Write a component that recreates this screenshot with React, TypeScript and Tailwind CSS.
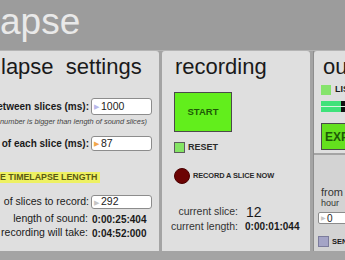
import React from 'react';

const Field = ({ value, tip }: { value: string; tip: string }) => (
  <div className="flex items-center h-full w-[61px] bg-white border border-[#8c8c8c] rounded-[3px] pl-[2px]">
    <span className={`text-[7px] leading-none ${tip}`}>▶</span>
    <span className="ml-[2px] text-[10.5px] text-[#222]">{value}</span>
  </div>
);

export default function App() {
  return (
    <div className="w-[345px] h-[260px] overflow-hidden bg-[#a4a4a4] font-['Liberation_Sans',Arial,sans-serif] text-[#1a1a1a]">
      <header className="h-[51px] bg-[#9c9c9c] border-b border-[#b4b4b4] overflow-hidden">
        <div className="pt-[2px] text-[37px] leading-[40px] text-[#e9e9e9] whitespace-nowrap">apse</div>
      </header>

      <div className="flex h-[200px] gap-[3px]">
        {/* settings */}
        <section className="w-[159px] shrink-0 bg-[#dfdfdf] rounded-tr-[3px] flex flex-col">
          <div className="h-[47px] pt-[5px] pl-[1px] text-[22px] leading-[22px] whitespace-nowrap">lapse&nbsp; settings</div>

          <div className="flex h-[17px] gap-[2px]">
            <div className="w-[89px] flex justify-end items-center text-[10px] font-bold whitespace-nowrap">etween slices (ms):</div>
            <Field value="1000" tip="text-[#b8b8ea]" />
          </div>
          <div className="h-[13px] flex items-center text-[7.4px] italic text-[#444] whitespace-nowrap">number is bigger than length of sound slices)</div>

          <div className="flex h-[15px] gap-[2px] mt-[8px]">
            <div className="w-[89px] flex justify-end items-center text-[10px] font-bold whitespace-nowrap">of each slice (ms):</div>
            <Field value="87" tip="text-[#f2a64a]" />
          </div>

          <div className="mt-[21px] h-[11px] w-[100px] bg-[#eef162] flex items-center text-[8.8px] font-bold text-[#5a5a14] whitespace-nowrap">E TIMELAPSE LENGTH</div>

          <div className="flex h-[14px] gap-[2px] mt-[12px]">
            <div className="w-[89px] flex justify-end items-center text-[10.5px] whitespace-nowrap">of slices to record:</div>
            <Field value="292" tip="text-[#c4c4c4]" />
          </div>
          <div className="flex h-[14px] gap-[4px] mt-[3px] items-center">
            <div className="w-[88px] flex justify-end text-[10.5px] whitespace-nowrap">length of sound:</div>
            <div className="text-[10px] font-bold">0:00:25:404</div>
          </div>
          <div className="flex h-[14px] gap-[4px] items-center">
            <div className="w-[88px] flex justify-end text-[10.5px] whitespace-nowrap">recording will take:</div>
            <div className="text-[10px] font-bold">0:04:52:000</div>
          </div>
        </section>

        {/* recording */}
        <section className="w-[148px] shrink-0 bg-[#dfdfdf] rounded-t-[3px] flex flex-col pl-[12px]">
          <div className="h-[41px] pt-[5px] pl-[1px] text-[22px] leading-[22px]">recording</div>
          <button className="w-[58px] h-[40px] bg-[#62ee1c] border border-[#4a4a4a] flex items-center justify-center text-[9.5px] font-bold text-[#1d5a06]">
            START
          </button>
          <div className="flex items-center gap-[3px] mt-[10px] h-[11px]">
            <div className="w-[11px] h-[11px] bg-[#84e464] border border-[#5c5c5c]" />
            <span className="text-[9px] font-bold text-[#2a2a2a]">RESET</span>
          </div>
          <div className="flex items-center gap-[3px] mt-[15px] h-[16px]">
            <div className="w-[16px] h-[16px] rounded-full bg-[#6c0303] border border-[#4a0000]" />
            <span className="text-[7.4px] font-bold text-[#2a2a2a] tracking-[-0.1px]">RECORD A SLICE NOW</span>
          </div>
          <div className="flex items-center h-[15px] mt-[20px]">
            <div className="w-[64px] flex justify-end text-[10.5px] text-[#333] whitespace-nowrap">current slice:</div>
            <div className="ml-[8px] text-[14px] leading-none">12</div>
          </div>
          <div className="flex items-center h-[15px]">
            <div className="w-[64px] flex justify-end text-[10.5px] text-[#333] whitespace-nowrap">current length:</div>
            <div className="ml-[7px] text-[10px] font-bold">0:00:01:044</div>
          </div>
        </section>

        {/* output */}
        <section className="flex-1 flex flex-col gap-[2px] border-l border-[#8e8e8e]">
          <div className="h-[102px] bg-[#dfdfdf] rounded-tl-[3px] pl-[7px] overflow-hidden">
            <div className="h-[34px] pt-[5px] pl-[2px] text-[22px] leading-[22px] whitespace-nowrap">output</div>
            <div className="flex items-center gap-[4px] h-[10px]">
              <div className="w-[10px] h-[10px] bg-[#86e46c]" />
              <span className="text-[9px] font-bold whitespace-nowrap">LISTEN</span>
            </div>
            <div className="mt-[6px] w-[60px] h-[11px] flex flex-col">
              <div className="flex h-[5px]">
                <div className="w-[20px] bg-[#3fe27a]" />
                <div className="flex-1 bg-[#111]" />
              </div>
              <div className="h-[1px] bg-[#d8f4e0]" />
              <div className="flex h-[5px]">
                <div className="w-[20px] bg-[#3fe27a]" />
                <div className="flex-1 bg-[#111]" />
              </div>
            </div>
            <div className="mt-[11px] w-[60px] h-[27px] bg-[#64e01e] border border-[#4a4a4a] flex items-center pl-[3px] text-[12px] font-bold text-[#1d5a06] whitespace-nowrap">
              EXPORT
            </div>
          </div>
          <div className="flex-1 bg-[#d3d3d3] pl-[4px] overflow-hidden">
            <div className="mt-[31px] pl-[3px] text-[11px] leading-[12px] text-[#333] whitespace-nowrap">from time</div>
            <div className="pl-[3px] text-[9px] leading-[10px] text-[#333]">hour</div>
            <div className="mt-[4px] h-[12px] w-[50px] bg-white border border-[#8c8c8c] rounded-[2px] flex items-center pl-[2px]">
              <span className="text-[6px] leading-none text-[#c4c4c4]">▶</span>
              <span className="ml-[1px] text-[10px] text-[#222]">0</span>
            </div>
            <div className="flex items-center gap-[3px] mt-[12px]">
              <div className="w-[11px] h-[11px] bg-[#a4a4c6] border border-[#7c7c9c]" />
              <span className="text-[7.5px] font-bold whitespace-nowrap">SEND</span>
            </div>
          </div>
        </section>
      </div>
    </div>
  );
}
